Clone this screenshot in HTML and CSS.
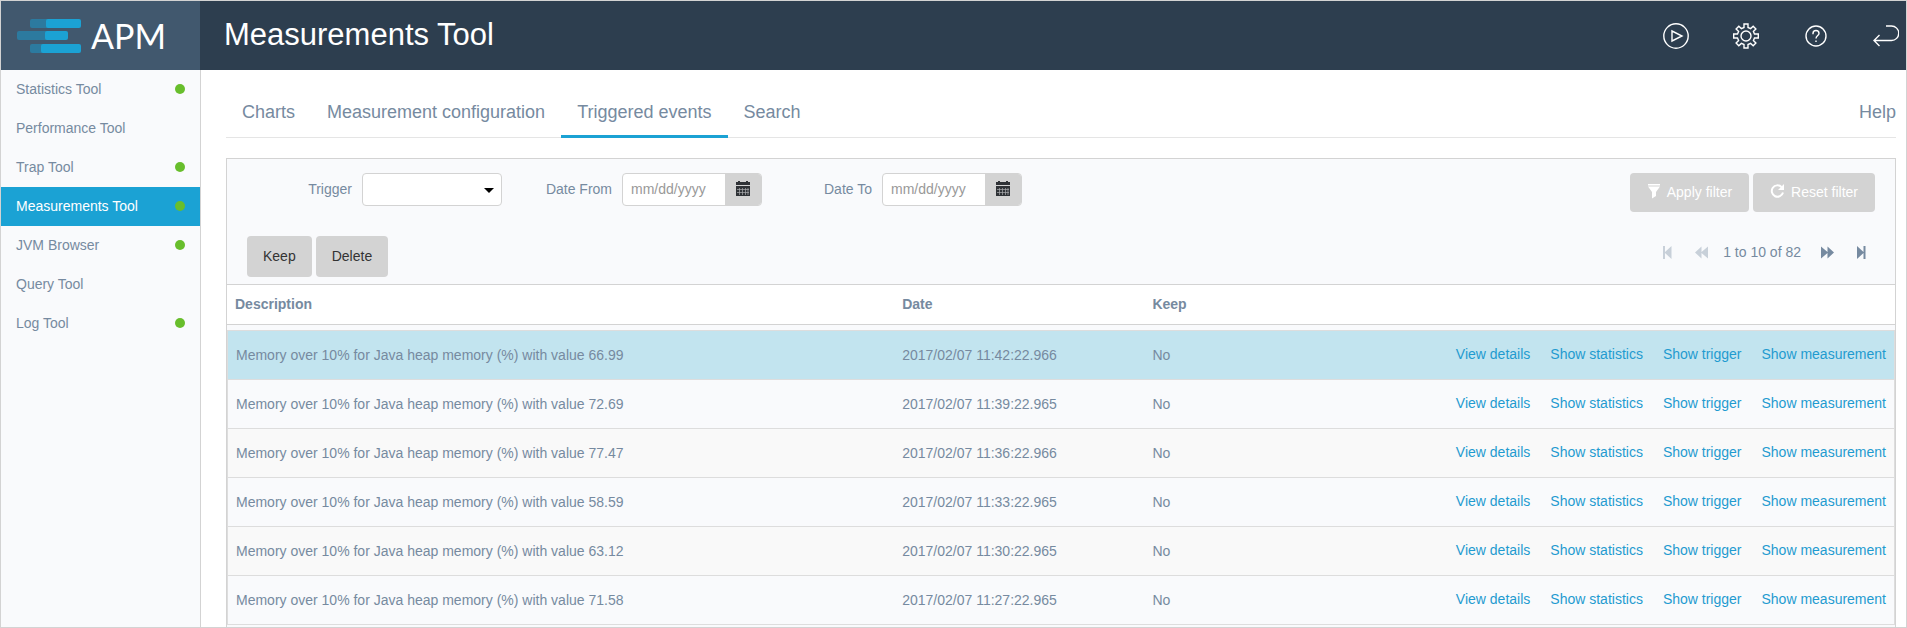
FILE: index.html
```html
<!DOCTYPE html>
<html lang="en">
<head>
<meta charset="utf-8">
<title>Measurements Tool</title>
<link rel="stylesheet" href="styles.css">
</head>
<body>
<div class="app">
  <header class="topbar">
    <a class="logo" href="#">
      <svg class="logo-mark" width="64" height="34" viewBox="0 0 64 34" aria-hidden="true">
        <g fill="#2c7a9f">
          <rect x="13" y="0" width="24" height="9" rx="2"/>
          <rect x="0" y="12" width="34" height="9" rx="2"/>
          <rect x="13" y="25" width="20" height="9" rx="2"/>
        </g>
        <g fill="#1ba2d4">
          <rect x="29" y="0" width="35" height="9" rx="2"/>
          <rect x="28" y="12" width="23" height="9" rx="2"/>
          <rect x="24" y="25" width="40" height="9" rx="2"/>
        </g>
      </svg>
      <span class="logo-text">APM</span>
    </a>
    <h1 class="title">Measurements Tool</h1>
    <div class="tools">
      <button type="button" class="tool" aria-label="Run">
        <svg width="26" height="26" viewBox="0 0 26 26"><circle cx="13" cy="13" r="12.2"/><path d="M9 8v10l10-5z"/></svg>
      </button>
      <button type="button" class="tool" aria-label="Settings">
        <svg width="26" height="26" viewBox="0 0 26 26"><circle cx="13" cy="13" r="5"/><path d="M11 1h4v3.5l2.600 1.100L20.200 3.200l2.700 2.700-2.500 2.500L21.500 11H25.300v4h-3.800l-1.100 2.600 2.500 2.500-2.700 2.700-2.600-2.400L15 21.500V25h-4v-3.500l-2.600-1.100-2.600 2.400-2.700-2.700 2.500-2.500L4.500 15H.7v-4h3.800l1.100-2.600-2.500-2.500 2.700-2.700 2.600 2.400L11 4.500z"/></svg>
      </button>
      <button type="button" class="tool" aria-label="Help">
        <svg width="26" height="26" viewBox="0 0 26 26"><circle cx="13" cy="13" r="10"/><path d="M10 11.200V10.500a3 3 0 0 1 6 0c0 2-3 2.200-3 5M13 17.500v1.500"/></svg>
      </button>
      <button type="button" class="tool" aria-label="Back">
        <svg width="26" height="26" viewBox="0 0 26 26"><path d="M13 3h5.500a7 7 0 0 1 0 14.500H1M6.500 12L1 17.500 6.500 23"/></svg>
      </button>
    </div>
  </header>
  <div class="body">
    <nav class="sidebar">
      <a class="side-item" href="#">Statistics Tool<span class="dot"></span></a>
      <a class="side-item" href="#">Performance Tool</a>
      <a class="side-item" href="#">Trap Tool<span class="dot"></span></a>
      <a class="side-item active" href="#">Measurements Tool<span class="dot"></span></a>
      <a class="side-item" href="#">JVM Browser<span class="dot"></span></a>
      <a class="side-item" href="#">Query Tool</a>
      <a class="side-item" href="#">Log Tool<span class="dot"></span></a>
    </nav>
    <main class="main">
      <nav class="tabs">
        <a class="tab" href="#">Charts</a>
        <a class="tab" href="#">Measurement configuration</a>
        <a class="tab current" href="#">Triggered events</a>
        <a class="tab" href="#">Search</a>
        <a class="help" href="#">Help</a>
      </nav>
      <section class="panel">
        <form class="filters">
          <div class="field">
            <label for="trigger">Trigger</label>
            <div class="control select">
              <select id="trigger"><option></option></select>
            </div>
          </div>
          <div class="field">
            <label for="from">Date From</label>
            <div class="control">
              <input id="from" type="text" placeholder="mm/dd/yyyy">
              <button type="button" class="cal" aria-label="Pick start date"><svg width="14" height="15" viewBox="0 0 14 15"><path fill="#2f3236" d="M2 0h2v1h6V0h2v1h2v3H0V1h2zM0 5h14v10H0z"/><path stroke="#a9abad" d="M1 8.500h12M1 11.500h12M3.500 7v7M6.500 7v7M9.500 7v7M12 7v7" stroke-width=".7"/></svg></button>
            </div>
          </div>
          <div class="field">
            <label for="to">Date To</label>
            <div class="control">
              <input id="to" type="text" placeholder="mm/dd/yyyy">
              <button type="button" class="cal" aria-label="Pick end date"><svg width="14" height="15" viewBox="0 0 14 15"><path fill="#2f3236" d="M2 0h2v1h6V0h2v1h2v3H0V1h2zM0 5h14v10H0z"/><path stroke="#a9abad" d="M1 8.500h12M1 11.500h12M3.500 7v7M6.500 7v7M9.500 7v7M12 7v7" stroke-width=".7"/></svg></button>
            </div>
          </div>
          <div class="filter-actions">
            <button type="button" class="btn light"><svg width="14" height="16" viewBox="0 0 14 16"><path fill="#fff" d="M1 0h12v1.500H1zM1 2.500h12L9 8v4l-4 2.500V8z"/></svg>Apply filter</button>
            <button type="button" class="btn light"><svg width="15" height="16" viewBox="0 0 15 16"><path fill="none" stroke="#fff" stroke-width="2" d="M11.500 3A5.700 5.700 0 1 0 13 8.500"/><path fill="#fff" d="M14 0v6H8z"/></svg>Reset filter</button>
          </div>
        </form>
        <div class="actions">
          <div class="row-actions">
            <button type="button" class="btn">Keep</button>
            <button type="button" class="btn">Delete</button>
          </div>
          <div class="pager">
            <button type="button" class="page" aria-label="First page" disabled><svg width="13" height="13" viewBox="0 0 13 13"><path d="M2 0h2v6L10.500 0v13L4 7v6H2z"/></svg></button>
            <button type="button" class="page" aria-label="Previous page" disabled><svg width="13" height="13" viewBox="0 0 13 13"><path d="M6.500 .5v5.500L13 .5v12L6.500 7v5.500L0 6.500z"/></svg></button>
            <span class="range">1 to 10 of 82</span>
            <button type="button" class="page" aria-label="Next page"><svg width="13" height="13" viewBox="0 0 13 13"><path d="M6.500 .5v5.500L0 .5v12L6.500 7v5.500L13 6.500z"/></svg></button>
            <button type="button" class="page last" aria-label="Last page"><svg width="13" height="13" viewBox="0 0 13 13"><path d="M10.500 0h-2v6L2 0v13l6.500-6v6h2z"/></svg></button>
          </div>
        </div>
        <table class="events">
          <colgroup><col class="c-desc"><col class="c-date"><col class="c-keep"><col></colgroup>
          <thead>
            <tr><th>Description</th><th>Date</th><th>Keep</th><th></th></tr>
          </thead>
          <tbody>
            <tr class="spacer"><td colspan="4"></td></tr>
            <tr class="selected"><td>Memory over 10% for Java heap memory (%) with value 66.99</td><td>2017/02/07 11:42:22.966</td><td>No</td><td class="links"><a href="#">View details</a><a href="#">Show statistics</a><a href="#">Show trigger</a><a href="#">Show measurement</a></td></tr>
            <tr><td>Memory over 10% for Java heap memory (%) with value 72.69</td><td>2017/02/07 11:39:22.965</td><td>No</td><td class="links"><a href="#">View details</a><a href="#">Show statistics</a><a href="#">Show trigger</a><a href="#">Show measurement</a></td></tr>
            <tr class="odd"><td>Memory over 10% for Java heap memory (%) with value 77.47</td><td>2017/02/07 11:36:22.966</td><td>No</td><td class="links"><a href="#">View details</a><a href="#">Show statistics</a><a href="#">Show trigger</a><a href="#">Show measurement</a></td></tr>
            <tr><td>Memory over 10% for Java heap memory (%) with value 58.59</td><td>2017/02/07 11:33:22.965</td><td>No</td><td class="links"><a href="#">View details</a><a href="#">Show statistics</a><a href="#">Show trigger</a><a href="#">Show measurement</a></td></tr>
            <tr class="odd"><td>Memory over 10% for Java heap memory (%) with value 63.12</td><td>2017/02/07 11:30:22.965</td><td>No</td><td class="links"><a href="#">View details</a><a href="#">Show statistics</a><a href="#">Show trigger</a><a href="#">Show measurement</a></td></tr>
            <tr><td>Memory over 10% for Java heap memory (%) with value 71.58</td><td>2017/02/07 11:27:22.965</td><td>No</td><td class="links"><a href="#">View details</a><a href="#">Show statistics</a><a href="#">Show trigger</a><a href="#">Show measurement</a></td></tr>
          </tbody>
        </table>
      </section>
    </main>
  </div>
</div>
</body>
</html>
```
FILE: styles.css
```css
* { box-sizing: border-box; }

body {
  margin: 0;
  font: 14px/20px "Liberation Sans", Arial, sans-serif;
  color: #768aa0;
  background: #fff;
}

a { color: inherit; text-decoration: none; }

button, input, select { font: inherit; margin: 0; }

button { cursor: pointer; }

.app {
  display: flex;
  flex-direction: column;
  height: 100vh;
  border: 1px solid #d3d3d3;
  overflow: hidden;
}

/* Top bar */
.topbar {
  display: flex;
  align-items: stretch;
  flex: none;
  height: 69px;
  background: #2d3e4f;
  color: #fff;
}

.logo {
  display: flex;
  align-items: center;
  gap: 10px;
  width: 199px;
  padding-left: 16px;
  background: #41586e;
}

.logo-text {
  font: 400 34px/34px Lato, "Open Sans", sans-serif;
}

.title {
  flex: 1;
  margin: 0;
  padding-left: 24px;
  font-size: 31px;
  font-weight: 400;
  line-height: 67px;
}

.tools {
  display: flex;
  align-items: center;
  gap: 44px;
  padding-right: 7px;
}

.tool {
  display: flex;
  padding: 0;
  border: 0;
  background: none;
}

.tool svg { fill: none; stroke: #fff; stroke-width: 1.4; }

/* Side menu */
.body { display: flex; flex: 1; min-height: 0; }

.sidebar {
  flex: none;
  width: 200px;
  background: #f9fafc;
  border-right: 1px solid #d3d3d3;
}

.side-item {
  display: flex;
  align-items: center;
  justify-content: space-between;
  height: 39px;
  padding: 0 15px 2px;
}

.side-item.active { background: #1ba2d4; color: #fff; }

.dot {
  width: 10px;
  height: 10px;
  border-radius: 50%;
  background: #68be2c;
}

/* Content */
.main {
  display: flex;
  flex-direction: column;
  flex: 1;
  min-width: 0;
  padding: 20px 10px 0 25px;
}

.tabs {
  display: flex;
  flex: none;
  margin-bottom: 20px;
  box-shadow: inset 0 -1px #e5e5e5;
  font-size: 18px;
  line-height: 24px;
}

.tab { padding: 10px 16px 11px; border-bottom: 3px solid transparent; }

.tab.current { border-color: #1ba2d4; }

.help { margin-left: auto; padding: 10px 0; }

.panel {
  flex: 1;
  min-height: 0;
  border: 1px solid #d3d3d3;
  border-bottom: 0;
  background: #f9fafc;
}

.filters { display: flex; padding: 14px 20px 0 15px; }

.field {
  display: grid;
  grid-template-columns: 110px 140px;
  gap: 10px;
  align-items: center;
  height: 33px;
}

.field label { padding-bottom: 2px; text-align: right; }

.control {
  position: relative;
  display: flex;
  height: 33px;
  border: 1px solid #d3d3d3;
  border-radius: 4px;
  background: #fff;
  overflow: hidden;
}

.control select,
.control input {
  flex: 1;
  min-width: 0;
  padding: 0 8px 2px;
  border: 0;
  background: none;
  color: inherit;
  appearance: none;
}

.control input::placeholder { color: #999; opacity: 1; }

.select::after {
  content: "";
  position: absolute;
  right: 7px;
  top: 14px;
  border: 5px solid transparent;
  border-top-color: #000;
  border-bottom: 0;
  pointer-events: none;
}

.cal {
  display: flex;
  justify-content: center;
  width: 36px;
  padding: 7px 0 0;
  border: 0;
  background: #d3d3d3;
}

.filter-actions, .row-actions { display: flex; gap: 4px; }

.filter-actions { margin-left: auto; }

.btn {
  display: flex;
  align-items: center;
  gap: 6px;
  padding: 9px 16px 11px;
  border: 0;
  border-radius: 4px;
  background: #d3d3d3;
  color: #333;
}

.btn.light { height: 39px; padding: 9px 17px 10px; color: #fff; }

.actions {
  display: flex;
  justify-content: space-between;
  align-items: flex-start;
  padding: 24px 27px 7px 20px;
}

.row-actions .btn { height: 41px; }

.pager { display: flex; align-items: center; height: 32px; }

.page {
  display: flex;
  padding: 0;
  border: 0;
  background: none;
  color: #768aa0;
}

.page:disabled { color: #c8d0d9; }

.page svg { fill: currentColor; }

.page:first-child { margin-right: 21px; }

.page.last { margin-left: 21px; }

.range { padding: 0 20px 0 15px; }

/* Events table */
.events {
  width: 100%;
  table-layout: fixed;
  border-spacing: 0;
}

.c-desc { width: 40%; }

.c-date, .c-keep { width: 15%; }

.events th {
  height: 41px;
  padding: 0 8px 2px;
  border: solid #d3d3d3;
  border-width: 1px 0;
  background: #fff;
  text-align: left;
}

.events td {
  height: 49px;
  padding: 0 8px 1px;
  border-bottom: 1px solid #ddd;
}

.events td:first-child { border-left: 1px solid #ddd; }

.events td:last-child { border-right: 1px solid #ddd; }

.events .spacer td { height: 6px; padding: 0; border-width: 0 0 1px; }

.selected { background: #c2e4ef; }

.odd { background: #f9f9f9; }

.events .links {
  padding-bottom: 2px;
  text-align: right;
  white-space: nowrap;
  color: #1f9bd0;
}

.links a + a { margin-left: 20px; }
```
